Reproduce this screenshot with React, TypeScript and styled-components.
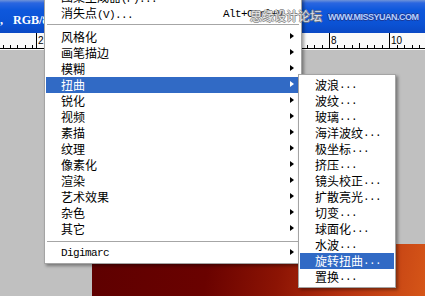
import React from "react";
import styled, { createGlobalStyle } from "styled-components";

const GlobalStyle = createGlobalStyle`
  html, body { margin: 0; padding: 0; }
  body { width: 425px; height: 296px; overflow: hidden; background: #c0c0c0; }
`;

const Screen = styled.div`
  position: relative;
  width: 425px;
  height: 296px;
  overflow: hidden;
  display: flex;
  flex-direction: column;
  background: #c0c0c0;
`;

const TitleBar = styled.div`
  flex: none;
  height: 33px;
  box-sizing: border-box;
  display: flex;
  align-items: flex-end;
  padding-bottom: 7px;
  background: linear-gradient(
    to bottom,
    #6f93d8 0px,
    #2a66e0 3px,
    #0e58dc 10px,
    #0b52d4 24px,
    #0a48c4 33px
  );
`;

const TitleText = styled.span`
  font: bold 12px/12px "Liberation Serif", serif;
  color: #ffffff;
  white-space: nowrap;
  word-spacing: 7px;
  margin-left: -6px;
`;

const RulerBar = styled.div`
  flex: none;
  height: 17px;
  background: #fafafa;
`;

const Workspace = styled.div`
  flex: 1;
  display: flex;
  padding: 194px 0 0 92px;
  background: #c0c0c0;
`;

const DocCanvas = styled.div`
  flex: 1;
  background: linear-gradient(
    100deg,
    #5e0000 0%,
    #6a0200 35%,
    #8c1404 56%,
    #b63210 76%,
    #d65618 100%
  );
`;

const Menu = styled.ul`
  position: absolute;
  margin: 0;
  list-style: none;
  box-sizing: border-box;
  background: #ffffff;
  border: 1px solid #a4a4a4;
  box-shadow: 2px 2px 3px rgba(0, 0, 0, 0.38);
  font: 12px/16px "Noto Sans CJK SC", sans-serif;
  color: #000000;
`;

const MainMenu = styled(Menu)`
  left: 44px;
  top: -14px;
  width: 258px;
  padding: 2px 1px;
`;

const SubMenu = styled(Menu)`
  left: 298px;
  top: 74px;
  width: 98px;
  padding: 2px 1px;
`;

const Item = styled.li<{ $active?: boolean }>`
  height: 16px;
  display: grid;
  grid-template-columns: 162px 67px 10px;
  align-items: center;
  padding-left: 15px;
  white-space: nowrap;
  background: ${(p) => (p.$active ? "#316ac5" : "transparent")};
  color: ${(p) => (p.$active ? "#ffffff" : "#000000")};
`;

const SubItem = styled.li<{ $active?: boolean }>`
  height: 16px;
  display: flex;
  align-items: center;
  padding-left: 15px;
  white-space: nowrap;
  background: ${(p) => (p.$active ? "#316ac5" : "transparent")};
  color: ${(p) => (p.$active ? "#ffffff" : "#000000")};
`;

const Latin = styled.span`
  font-family: "Liberation Mono", monospace;
  font-size: 11px;
  letter-spacing: -0.6px;
`;

const Arrow = styled.span`
  justify-self: start;
  width: 0;
  height: 0;
  border-left: 4px solid currentColor;
  border-top: 3px solid transparent;
  border-bottom: 3px solid transparent;
  margin-top: -3px;
`;

const Separator = styled.li<{ $offset: number }>`
  height: 8px;
  box-sizing: border-box;
  padding-top: ${(p) => p.$offset}px;
  &::before {
    content: "";
    display: block;
    height: 1px;
    margin: 0 1px;
    background: #a6a6a6;
  }
`;

const Watermark = styled.div`
  position: absolute;
  left: 250px;
  top: 8px;
  display: flex;
  align-items: center;
  gap: 6px;
  pointer-events: none;
`;

const WatermarkCn = styled.span`
  font: 12px/16px "Noto Sans CJK SC", sans-serif;
  color: #eeeeee;
  white-space: nowrap;
  text-shadow: 1px 0 #7a7a7a, -1px 0 #7a7a7a, 0 1px #7a7a7a, 0 -1px #7a7a7a;
  opacity: 0.9;
`;

const WatermarkEn = styled.span`
  font: bold 9px/12px "Liberation Sans", sans-serif;
  letter-spacing: -0.5px;
  color: #b4d0ff;
  white-space: nowrap;
  margin-top: 1px;
  text-shadow: 1px 0 #1a3a9a, -1px 0 #1a3a9a, 0 1px #1a3a9a, 0 -1px #1a3a9a;
`;

const Ruler: React.FC = () => {
  const small: number[] = [];
  [3, 10, 17, 25, 32].forEach((x) => small.push(x));
  for (let x = 306.5; x < 425; x += 7.5) small.push(x);
  const majors = [
    { x: 36, label: "2" },
    { x: 329, label: "8" },
    { x: 389, label: "10" },
  ];
  return (
    <svg width="425" height="17" viewBox="0 0 425 17">
      <line x1="0" y1="15.5" x2="425" y2="15.5" stroke="#000" strokeWidth="1" />
      {small.map((x) => (
        <line
          key={x}
          x1={Math.round(x) + 0.5}
          y1="12"
          x2={Math.round(x) + 0.5}
          y2="16"
          stroke="#000"
          strokeWidth="1"
        />
      ))}
      <line x1="359.5" y1="10" x2="359.5" y2="16" stroke="#000" strokeWidth="1" />
      {majors.map((m) => (
        <g key={m.x}>
          <line x1={m.x + 0.5} y1="0" x2={m.x + 0.5} y2="16" stroke="#000" strokeWidth="1" />
          <text
            x={m.x + 2}
            y="11"
            fontFamily="Liberation Sans, sans-serif"
            fontSize="10"
            fill="#000"
          >
            {m.label}
          </text>
        </g>
      ))}
    </svg>
  );
};

const filters = [
  "风格化",
  "画笔描边",
  "模糊",
  "扭曲",
  "锐化",
  "视频",
  "素描",
  "纹理",
  "像素化",
  "渲染",
  "艺术效果",
  "杂色",
  "其它",
];

const distort = [
  "波浪",
  "波纹",
  "玻璃",
  "海洋波纹",
  "极坐标",
  "挤压",
  "镜头校正",
  "扩散亮光",
  "切变",
  "球面化",
  "水波",
  "旋转扭曲",
  "置换",
];

export default function App() {
  return (
    <Screen>
      <GlobalStyle />
      <TitleBar>
        <TitleText>1, RGB/8)</TitleText>
      </TitleBar>
      <RulerBar>
        <Ruler />
      </RulerBar>
      <Workspace>
        <DocCanvas />
      </Workspace>

      <MainMenu>
        <Item>
          <span>
            图案生成器<Latin>(P)...</Latin>
          </span>
        </Item>
        <Item>
          <span>
            消失点<Latin>(V)...</Latin>
          </span>
          <Latin>Alt+Ctrl+V</Latin>
        </Item>
        <Separator $offset={3} />
        {filters.map((f) => (
          <Item key={f} $active={f === "扭曲"}>
            <span>{f}</span>
            <span />
            <Arrow />
          </Item>
        ))}
        <Separator $offset={4} />
        <Item>
          <Latin>Digimarc</Latin>
          <span />
          <Arrow />
        </Item>
      </MainMenu>

      <SubMenu>
        {distort.map((d) => (
          <SubItem key={d} $active={d === "旋转扭曲"}>
            {d}
            <Latin>...</Latin>
          </SubItem>
        ))}
      </SubMenu>

      <Watermark>
        <WatermarkCn>思缘设计论坛</WatermarkCn>
        <WatermarkEn>WWW.MISSYUAN.COM</WatermarkEn>
      </Watermark>
    </Screen>
  );
}
